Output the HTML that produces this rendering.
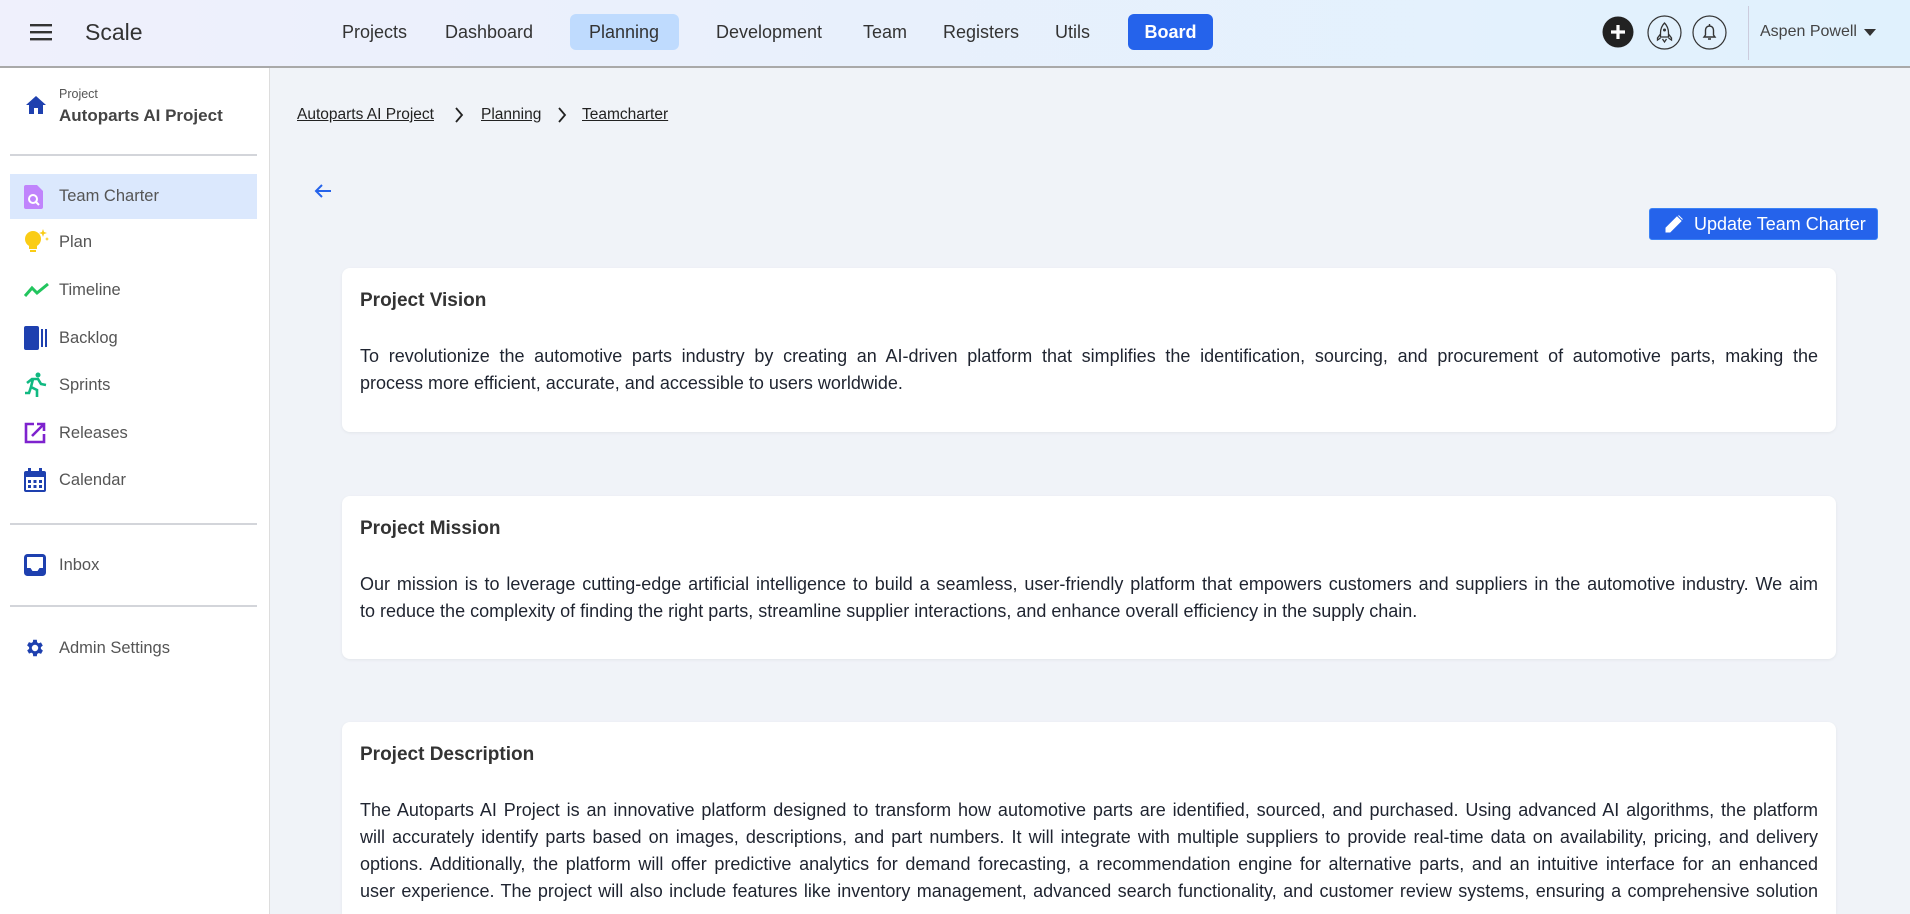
<!DOCTYPE html>
<html><head><meta charset="utf-8">
<style>
*{box-sizing:border-box;margin:0;padding:0}
html,body{width:1910px;height:914px;overflow:hidden}
body{background:#f0f3f8;font-family:"Liberation Sans",sans-serif;color:#222}
#wrap{position:relative;width:1910px;height:914px;overflow:hidden}
.hdr{position:absolute;left:0;top:0;width:1910px;height:68px;background:linear-gradient(90deg,#eff0fc,#e0f1fd);border-bottom:2px solid #a9a9a9}
.abs{position:absolute}
.nav{position:absolute;top:22px;font-size:18px;color:#333}
.side{position:absolute;left:0;top:68px;width:270px;height:846px;background:#fff;border-right:1px solid #ddd}
.item{position:absolute;left:10px;width:247px;height:46px;display:flex;align-items:center;font-size:16.5px;color:#555}
.item svg{position:absolute;left:14px}
.item span{position:absolute;left:49px}
.hr{position:absolute;left:10px;width:247px;height:2px;background:#d3d5da}
.card{position:absolute;left:342px;width:1494px;background:#fff;border-radius:8px;box-shadow:0 1px 3px rgba(0,0,0,.06);overflow:hidden}
.card h3{position:absolute;left:18px;top:22px;font-size:19px;font-weight:600;color:#333}
.txt{position:absolute;left:18px;right:18px;font-size:18px;color:#1f2430;line-height:27px}
.txt div{text-align:justify;text-align-last:justify;white-space:nowrap}
.txt div.l{text-align-last:left}
.bc{position:absolute;top:106px;font-size:15.5px;text-decoration:underline;color:#222}
</style></head><body><div id="wrap">
<div class="hdr"></div>
<svg class="abs" style="left:30px;top:23px" width="22" height="18" viewBox="0 0 22 18"><rect y="1" width="22" height="2.4" fill="#333"/><rect y="8" width="22" height="2.4" fill="#333"/><rect y="15" width="22" height="2.4" fill="#333"/></svg>
<div class="abs" style="left:85px;top:19px;font-size:23px;color:#333">Scale</div>
<div class="nav" style="left:342px">Projects</div>
<div class="nav" style="left:445px">Dashboard</div>
<div class="abs" style="left:570px;top:14px;width:109px;height:36px;background:#bfdbfe;border-radius:6px"></div>
<div class="nav" style="left:589px">Planning</div>
<div class="nav" style="left:716px">Development</div>
<div class="nav" style="left:863px">Team</div>
<div class="nav" style="left:943px">Registers</div>
<div class="nav" style="left:1055px">Utils</div>
<div class="abs" style="left:1128px;top:14px;width:85px;height:36px;background:#2563eb;border-radius:6px;color:#fff;font-weight:bold;font-size:18px;text-align:center;line-height:36px">Board</div>
<svg class="abs" style="left:1602px;top:16px" width="32" height="32" viewBox="0 0 32 32"><circle cx="16" cy="16" r="15.5" fill="#222"/><path d="M16 9v14M9 16h14" stroke="#fff" stroke-width="3.2"/></svg>
<svg class="abs" style="left:1647px;top:15px" width="35" height="35" viewBox="0 0 35 35"><circle cx="17.5" cy="17.5" r="16.5" fill="none" stroke="#333" stroke-width="1.2"/><path d="M17.5 8c3 3 4 6 4 10v4h-8v-4c0-4 1-7 4-10zM13.5 19l-3 4v2l3-2M21.5 19l3 4v2l-3-2M15.5 24l2 3 2-3" fill="none" stroke="#333" stroke-width="1.3"/><circle cx="17.5" cy="15" r="1.5" fill="#333"/></svg>
<svg class="abs" style="left:1692px;top:15px" width="35" height="35" viewBox="0 0 35 35"><circle cx="17.5" cy="17.5" r="16.5" fill="none" stroke="#333" stroke-width="1.2"/><path d="M12 22h11l-1.5-2v-5a4 4 0 0 0-8 0v5zM17.5 9v2M16 24h3" fill="none" stroke="#333" stroke-width="1.4"/></svg>
<div class="abs" style="left:1748px;top:6px;width:1px;height:54px;background:#ccd"></div>
<div class="abs" style="left:1760px;top:23px;font-size:16px;color:#444">Aspen Powell</div>
<svg class="abs" style="left:1864px;top:29px" width="12" height="8"><path d="M0 0h12L6 7z" fill="#333"/></svg>

<div class="side">
<svg class="abs" style="left:25px;top:27px" width="22" height="20" viewBox="0 0 22 20"><path d="M11 1L1 10h3v9h5v-6h4v6h5v-9h3z" fill="#1e40af"/></svg>
<div class="abs" style="left:59px;top:19px;font-size:12.5px;color:#555">Project</div>
<div class="abs" style="left:59px;top:38px;font-size:17px;font-weight:bold;color:#444">Autoparts AI Project</div>
<div class="hr" style="top:86px"></div>
<div class="item" style="top:106px;background:#dbe8fd;height:45px"><svg width="20" height="24" viewBox="0 0 20 24"><path d="M2 0h11l6 6v16a2 2 0 0 1-2 2H2a2 2 0 0 1-2-2V2a2 2 0 0 1 2-2z" fill="#c084fc"/><circle cx="9" cy="14" r="4" fill="none" stroke="#fff" stroke-width="2"/><path d="M12 17l3 3" stroke="#fff" stroke-width="2"/></svg><span>Team Charter</span></div>
<div class="item" style="top:151px"><svg width="26" height="26" viewBox="0 0 26 26"><circle cx="9" cy="10" r="8" fill="#facc15"/><rect x="5" y="17" width="8" height="3" fill="#facc15"/><rect x="6" y="21" width="6" height="2" fill="#facc15"/><path d="M19 0l1 3 3 1-3 1-1 3-1-3-3-1 3-1zM23 8l.6 1.4L25 10l-1.4.6L23 12l-.6-1.4L21 10l1.4-.6z" fill="#facc15"/></svg><span>Plan</span></div>
<div class="item" style="top:199px"><svg width="26" height="16" viewBox="0 0 26 16"><path d="M1 14l7-8 5 5 11-9" fill="none" stroke="#22c55e" stroke-width="3"/></svg><span>Timeline</span></div>
<div class="item" style="top:247px"><svg width="24" height="24" viewBox="0 0 24 24"><rect x="0" y="0" width="15" height="24" rx="2" fill="#1e40af"/><rect x="17" y="3" width="2" height="18" fill="#1e40af"/><rect x="21" y="3" width="2" height="18" fill="#1e40af"/></svg><span>Backlog</span></div>
<div class="item" style="top:294px"><svg width="24" height="26" viewBox="0 0 24 26"><circle cx="14" cy="3" r="2.5" fill="#10b981"/><path d="M3 11l5-4h6l3 5 5 1M9 7l-2 8 6 3v7M7 15l-2 6H1" fill="none" stroke="#10b981" stroke-width="2.6"/></svg><span>Sprints</span></div>
<div class="item" style="top:342px"><svg width="22" height="22" viewBox="0 0 22 22"><path d="M10 2H2v18h18v-8" fill="none" stroke="#7e22ce" stroke-width="2.6"/><path d="M8 14L20 2M13 2h7v7" fill="none" stroke="#7e22ce" stroke-width="2.6"/></svg><span>Releases</span></div>
<div class="item" style="top:389px"><svg width="22" height="24" viewBox="0 0 22 24"><rect x="0" y="3" width="22" height="21" rx="2" fill="#1e40af"/><rect x="4" y="0" width="3" height="5" fill="#1e40af"/><rect x="15" y="0" width="3" height="5" fill="#1e40af"/><rect x="2" y="9" width="18" height="13" fill="#fff"/><g fill="#1e40af"><rect x="4" y="12" width="3" height="3"/><rect x="9.5" y="12" width="3" height="3"/><rect x="15" y="12" width="3" height="3"/><rect x="4" y="17" width="3" height="3"/><rect x="9.5" y="17" width="3" height="3"/><rect x="15" y="17" width="3" height="3"/></g></svg><span>Calendar</span></div>
<div class="hr" style="top:455px"></div>
<div class="item" style="top:474px"><svg width="22" height="22" viewBox="0 0 22 22"><rect x="1.5" y="1.5" width="19" height="19" rx="2" fill="none" stroke="#1e40af" stroke-width="3"/><path d="M1.5 14h5l2 3h5l2-3h5v6.5h-19z" fill="#1e40af"/></svg><span>Inbox</span></div>
<div class="hr" style="top:537px"></div>
<div class="item" style="top:557px"><svg width="22" height="22" viewBox="0 0 24 24"><path d="M19.4 13a7.5 7.5 0 0 0 0-2l2.1-1.6-2-3.5-2.5 1a7.6 7.6 0 0 0-1.7-1L15 3h-4l-.4 2.6a7.6 7.6 0 0 0-1.7 1l-2.5-1-2 3.5L6.6 11a7.5 7.5 0 0 0 0 2l-2.1 1.6 2 3.5 2.5-1a7.6 7.6 0 0 0 1.7 1L11 21h4l.4-2.6a7.6 7.6 0 0 0 1.7-1l2.5 1 2-3.5zM13 15.5a3.5 3.5 0 1 1 0-7 3.5 3.5 0 0 1 0 7z" fill="#1e40af" transform="translate(-1 0)"/></svg><span>Admin Settings</span></div>
</div>

<div class="bc" style="left:297px">Autoparts AI Project</div>
<svg class="abs" style="left:454px;top:107px" width="10" height="16"><path d="M2 1l6 7-6 7" fill="none" stroke="#222" stroke-width="1.8"/></svg>
<div class="bc" style="left:481px">Planning</div>
<svg class="abs" style="left:557px;top:107px" width="10" height="16"><path d="M2 1l6 7-6 7" fill="none" stroke="#222" stroke-width="1.8"/></svg>
<div class="bc" style="left:582px">Teamcharter</div>
<svg class="abs" style="left:313px;top:183px" width="20" height="16"><path d="M18 8H3M9 2L3 8l6 6" fill="none" stroke="#2563eb" stroke-width="2"/></svg>

<div class="abs" style="left:1649px;top:208px;width:229px;height:32px;background:#2563eb;border-radius:3px;border:1px solid #3b82f6"></div>
<svg class="abs" style="left:1665px;top:215px" width="18" height="18" viewBox="0 0 18 18"><path d="M1 17v-4L12 2l4 4L5 17zM13.5 0.5l4 4" fill="#fff" stroke="#fff" stroke-width="1"/></svg>
<div class="abs" style="left:1694px;top:214px;font-size:18px;color:#fff">Update Team Charter</div>

<div class="card" style="top:268px;height:164px"><h3>Project Vision</h3>
<div class="txt" style="top:75px"><div>To revolutionize the automotive parts industry by creating an AI-driven platform that simplifies the identification, sourcing, and procurement of automotive parts, making the</div><div class="l">process more efficient, accurate, and accessible to users worldwide.</div></div></div>

<div class="card" style="top:496px;height:163px"><h3>Project Mission</h3>
<div class="txt" style="top:75px"><div>Our mission is to leverage cutting-edge artificial intelligence to build a seamless, user-friendly platform that empowers customers and suppliers in the automotive industry. We aim</div><div class="l">to reduce the complexity of finding the right parts, streamline supplier interactions, and enhance overall efficiency in the supply chain.</div></div></div>

<div class="card" style="top:722px;height:192px;border-radius:8px 8px 0 0"><h3>Project Description</h3>
<div class="txt" style="top:75px"><div>The Autoparts AI Project is an innovative platform designed to transform how automotive parts are identified, sourced, and purchased. Using advanced AI algorithms, the platform</div><div>will accurately identify parts based on images, descriptions, and part numbers. It will integrate with multiple suppliers to provide real-time data on availability, pricing, and delivery</div><div>options. Additionally, the platform will offer predictive analytics for demand forecasting, a recommendation engine for alternative parts, and an intuitive interface for an enhanced</div><div>user experience. The project will also include features like inventory management, advanced search functionality, and customer review systems, ensuring a comprehensive solution</div></div></div>
</div></body></html>
